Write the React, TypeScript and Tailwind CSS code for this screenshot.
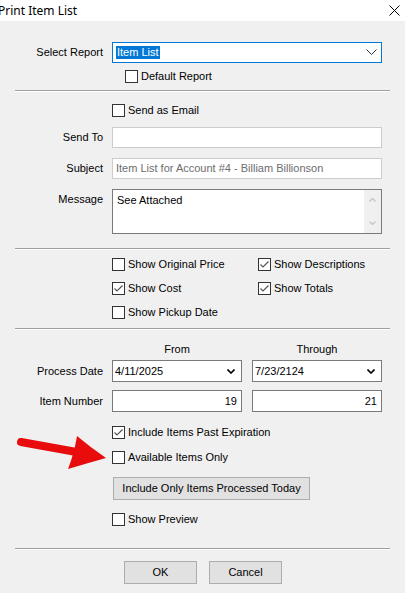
const ui = { fontFamily: '"Liberation Sans", Arial, sans-serif' };

function Check({ checked = false }: { checked?: boolean }) {
  return (
    <span className="flex h-[13px] w-[13px] shrink-0 items-center justify-center border border-[#333333] bg-white">
      {checked && (
        <svg width="11" height="11" viewBox="0 0 11 11">
          <polyline
            points="1.5,5.5 4,8 9.5,2.5"
            fill="none"
            stroke="#555555"
            strokeWidth="1.2"
          />
        </svg>
      )}
    </span>
  );
}

function CheckRow({
  label,
  checked,
  className = "",
}: {
  label: string;
  checked?: boolean;
  className?: string;
}) {
  return (
    <div className={`flex h-[13px] items-center gap-[3px] ${className}`}>
      <Check checked={checked} />
      <span className="text-[11px] leading-[13px] text-black">{label}</span>
    </div>
  );
}

function Separator({ className = "" }: { className?: string }) {
  return (
    <div className={`mx-[15px] ${className}`}>
      <div className="h-px bg-[#a0a0a0]" />
      <div className="h-px bg-white" />
    </div>
  );
}

function Label({ children }: { children: string }) {
  return (
    <div className="w-[103px] shrink-0 text-right text-[11px] leading-[13px] text-black">
      {children}
    </div>
  );
}

function Chevron({ thin = false }: { thin?: boolean }) {
  return thin ? (
    <svg width="11" height="7" viewBox="0 0 11 7">
      <polyline points="0.5,0.5 5.5,5.5 10.5,0.5" fill="none" stroke="#333" strokeWidth="1" />
    </svg>
  ) : (
    <svg width="8" height="5" viewBox="0 0 8 5">
      <polyline points="0.5,0.5 4,4 7.5,0.5" fill="none" stroke="#000" strokeWidth="1.6" />
    </svg>
  );
}

function Button({ children, className = "" }: { children: string; className?: string }) {
  return (
    <div
      className={`flex h-[23px] items-center justify-center border border-[#adadad] bg-[#e1e1e1] text-[11px] text-black ${className}`}
    >
      {children}
    </div>
  );
}

export default function App() {
  return (
    <div className="h-[593px] w-[405px] overflow-hidden bg-[#f0f0f0]" style={ui}>
      <div className="flex h-[21px] items-center justify-between bg-white">
        <span
          className="-ml-[2px] text-[12px] text-black"
          style={{ fontFamily: '"Noto Sans", "Open Sans", sans-serif' }}
        >
          Print Item List
        </span>
        <svg className="mr-[5px]" width="11" height="11" viewBox="0 0 11 11">
          <path d="M0.5 0.5 L10.5 10.5 M10.5 0.5 L0.5 10.5" stroke="#000" strokeWidth="1" />
        </svg>
      </div>

      <div className="relative flex flex-col">
        <div className="mt-[21px] flex h-[21px] items-center gap-[9px]">
          <Label>Select Report</Label>
          <div className="flex h-[21px] w-[270px] items-center justify-between border border-[#0078d7] bg-white pl-[3px] pr-[4px]">
            <span className="bg-[#0078d7] px-px text-[11px] leading-[13px] text-white">
              Item List
            </span>
            <Chevron thin />
          </div>
        </div>
        <CheckRow className="ml-[125px] mt-[7px]" label="Default Report" />
        <Separator className="mt-[7px]" />

        <CheckRow className="ml-[112px] mt-[12px]" label="Send as Email" />
        <div className="mt-[10px] flex items-center gap-[9px]">
          <Label>Send To</Label>
          <div className="h-[21px] w-[270px] border border-[#cccccc] bg-white" />
        </div>
        <div className="mt-[10px] flex items-center gap-[9px]">
          <Label>Subject</Label>
          <div className="flex h-[21px] w-[270px] items-center border border-[#cccccc] bg-white px-[3px] text-[11px] text-[#6d6d6d]">
            Item List for Account #4 - Billiam Billionson
          </div>
        </div>
        <div className="mt-[10px] flex items-start gap-[9px]">
          <div className="pt-[4px]">
            <Label>Message</Label>
          </div>
          <div className="flex h-[45px] w-[270px] border border-[#7a7a7a] bg-white">
            <div className="flex-1 px-[4px] pt-[4px] text-[11px] leading-[13px] text-black">
              See Attached
            </div>
            <div className="flex w-[17px] flex-col items-center justify-between bg-[#f0f0f0] py-[8px]">
              <svg width="7" height="4" viewBox="0 0 7 4">
                <polyline points="0.5,3.5 3.5,0.5 6.5,3.5" fill="none" stroke="#c2c2c2" strokeWidth="1.2" />
              </svg>
              <svg width="7" height="4" viewBox="0 0 7 4">
                <polyline points="0.5,0.5 3.5,3.5 6.5,0.5" fill="none" stroke="#c2c2c2" strokeWidth="1.2" />
              </svg>
            </div>
          </div>
        </div>
        <Separator className="mt-[14px]" />

        <div className="ml-[112px] mt-[8px] grid grid-cols-[146px_1fr] gap-y-[11px]">
          <CheckRow label="Show Original Price" />
          <CheckRow label="Show Descriptions" checked />
          <CheckRow label="Show Cost" checked />
          <CheckRow label="Show Totals" checked />
          <CheckRow label="Show Pickup Date" />
        </div>
        <Separator className="mt-[9px]" />

        <div className="ml-[112px] mt-[13px] flex h-[13px] gap-[10px] text-[11px] leading-[13px] text-black">
          <div className="w-[130px] text-center">From</div>
          <div className="w-[130px] text-center">Through</div>
        </div>
        <div className="mt-[4px] flex items-center gap-[9px]">
          <Label>Process Date</Label>
          <div className="flex gap-[10px]">
            {["4/11/2025", "7/23/2124"].map((d) => (
              <div
                key={d}
                className="flex h-[22px] w-[130px] items-center justify-between border border-[#7a7a7a] bg-white pl-[2px] pr-[6px] text-[11px] text-black"
              >
                <span>{d}</span>
                <Chevron />
              </div>
            ))}
          </div>
        </div>
        <div className="mt-[8px] flex items-center gap-[9px]">
          <Label>Item Number</Label>
          <div className="flex gap-[10px]">
            {["19", "21"].map((n) => (
              <div
                key={n}
                className="flex h-[22px] w-[130px] items-center justify-end border border-[#7a7a7a] bg-white px-[4px] text-[11px] text-black"
              >
                {n}
              </div>
            ))}
          </div>
        </div>

        <CheckRow className="ml-[112px] mt-[14px]" label="Include Items Past Expiration" checked />
        <CheckRow className="ml-[112px] mt-[12px]" label="Available Items Only" />
        <Button className="ml-[113px] mt-[13px] w-[197px]">Include Only Items Processed Today</Button>
        <CheckRow className="ml-[112px] mt-[13px]" label="Show Preview" />
        <Separator className="mt-[22px]" />

        <div className="mt-[11px] flex justify-center gap-[12px] pl-[1px]">
          <Button className="w-[73px]">OK</Button>
          <Button className="w-[73px]">Cancel</Button>
        </div>

        <svg
          className="absolute left-0 top-[409px]"
          width="115"
          height="45"
          viewBox="0 0 115 45"
        >
          <line x1="21" y1="12" x2="82" y2="23" stroke="#e80c0c" strokeWidth="8" strokeLinecap="round" />
          <path d="M77 6 Q90 17 106 28 Q88 33 68 39 Q74 24 77 6 Z" fill="#e80c0c" />
        </svg>
      </div>
    </div>
  );
}
